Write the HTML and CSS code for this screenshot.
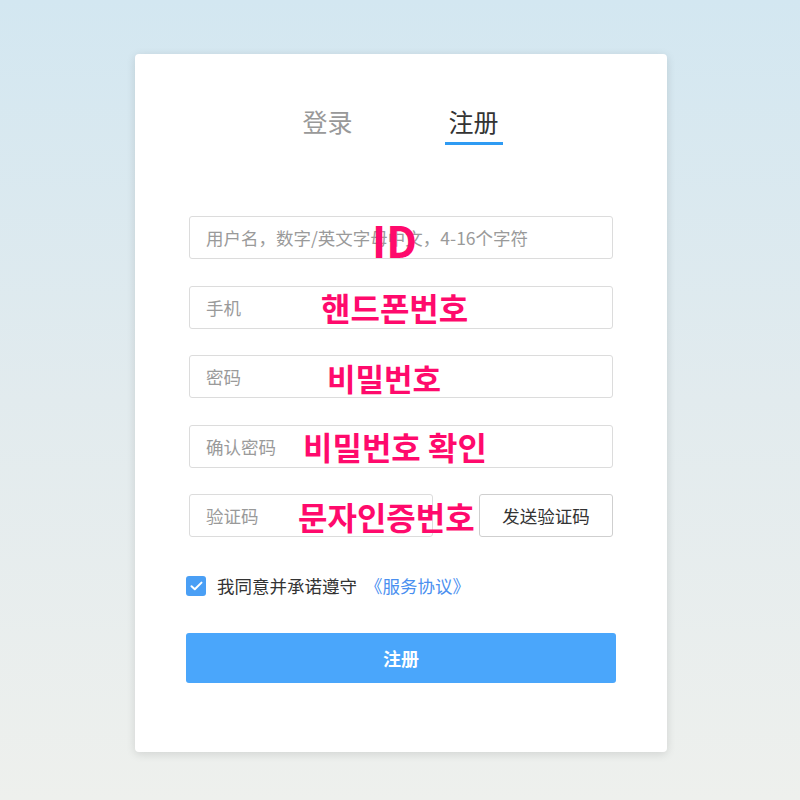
FILE: index.html
```html
<!DOCTYPE html>
<html lang="zh">
<head>
  <meta charset="UTF-8" />
  <meta name="viewport" content="width=device-width, initial-scale=1" />
  <title>注册</title>
  <link rel="stylesheet" href="styles.css">
</head>
<body>
  <div class="card">
    <div class="tabs">
      <span class="tab">登录</span>
      <span class="tab active">注册</span>
    </div>

    <form class="form">
      <div class="field">
        <input type="text" placeholder="用户名，数字/英文字母中文，4-16个字符" />
        <span class="note note-id">ID</span>
      </div>
      <div class="field">
        <input type="text" placeholder="手机" />
        <span class="note note-phone">핸드폰번호</span>
      </div>
      <div class="field">
        <input type="password" placeholder="密码" />
        <span class="note note-pass">비밀번호</span>
      </div>
      <div class="field">
        <input type="password" placeholder="确认密码" />
        <span class="note note-confirm">비밀번호 확인</span>
      </div>
      <div class="field code-row">
        <input type="text" class="code-input" placeholder="验证码" />
        <button type="button" class="send-btn">发送验证码</button>
        <span class="note note-code">문자인증번호</span>
      </div>

      <label class="agree">
        <span class="checkbox">
          <svg width="13" height="10" viewBox="0 0 13 10">
            <path d="M1.5 5.2 L4.8 8.3 L11.5 1.6" fill="none" stroke="#fff" stroke-width="2" stroke-linecap="round" stroke-linejoin="round"/>
          </svg>
        </span>
        <span class="agree-text">我同意并承诺遵守 <a href="#">《服务协议》</a></span>
      </label>

      <button type="button" class="submit">注册</button>
    </form>
  </div>
</body>
</html>
```

FILE: styles.css
```css
html, body {
  margin: 0;
  padding: 0;
}

body {
  height: 800px;
  overflow: hidden;
  background: linear-gradient(to bottom, #d3e7f1 0%, #e2ebee 50%, #eef0ed 100%);
  font-family: "Noto Sans CJK SC", "Noto Sans", sans-serif;
  color: #333;
}

.card {
  box-sizing: border-box;
  width: 532px;
  height: 698px;
  margin: 54px 0 0 135px;
  padding: 51px 54px 0 54px;
  background: #fff;
  border-radius: 4px;
  box-shadow: 0 2px 10px rgba(0, 0, 0, 0.12);
}

.tabs {
  display: flex;
  justify-content: center;
  gap: 88px;
  padding-right: 1px;
}

.tab {
  font-size: 25px;
  line-height: 32px;
  padding: 0 4px 5px;
  color: #999;
  border-bottom: 3px solid transparent;
}

.tab.active {
  color: #333;
  border-bottom-color: #2f9bf3;
}

.form {
  margin-top: 71px;
}

.field {
  position: relative;
  height: 43px;
  margin-bottom: 26.5px;
}

.field input {
  box-sizing: border-box;
  width: 424px;
  height: 43px;
  margin: 0;
  padding: 0 16px;
  border: 1px solid #dcdcdc;
  border-radius: 3px;
  font-family: inherit;
  font-size: 17.5px;
  color: #333;
  outline: none;
}

.field input::placeholder {
  color: #9a9a9a;
}

.code-row {
  display: flex;
  gap: 46px;
}

.field .code-input {
  width: 244px;
}

.send-btn {
  box-sizing: border-box;
  width: 134px;
  height: 43px;
  padding: 0;
  border: 1px solid #cfcfcf;
  border-radius: 3px;
  background: #fff;
  font-family: inherit;
  font-size: 17.5px;
  color: #333;
}

.note {
  position: absolute;
  top: 50%;
  transform: translateY(-50%);
  color: #ff0a6c;
  font-family: "Noto Sans CJK KR", sans-serif;
  font-weight: 700;
  font-size: 32px;
  line-height: 1;
  white-space: nowrap;
  pointer-events: none;
}

.note-id { left: 183px; font-size: 43px; margin-top: 1px; }
.note-phone { left: 132px; }
.note-pass { left: 138px; font-size: 31px; }
.note-confirm { left: 114px; }
.note-code { left: 109px; }

.agree {
  display: flex;
  align-items: center;
  margin: 39px 0 0 -3px;
  font-size: 17.5px;
  line-height: 20px;
  color: #333;
}

.checkbox {
  display: flex;
  align-items: center;
  justify-content: center;
  flex: none;
  width: 20px;
  height: 20px;
  margin-right: 11px;
  border-radius: 3px;
  background: #4a9ff5;
}

.agree-text {
  white-space: nowrap;
}

.agree a {
  margin-left: 4px;
  color: #4a8ff0;
  text-decoration: none;
}

.submit {
  display: block;
  width: 430px;
  height: 50px;
  margin: 37px 0 0 -3px;
  border: none;
  border-radius: 3px;
  background: #4aa6fb;
  color: #fff;
  font-family: inherit;
  font-size: 18px;
  font-weight: 700;
}
```
